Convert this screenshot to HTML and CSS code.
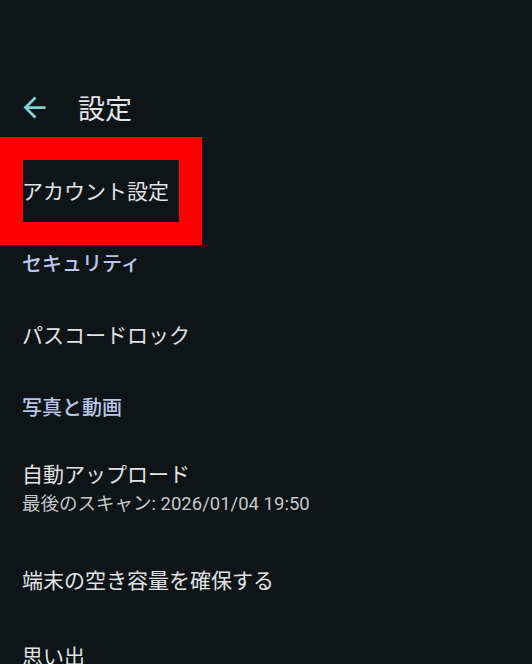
FILE: index.html
```html
<!DOCTYPE html>
<html lang="ja">
<head>
<meta charset="UTF-8">
<title>設定</title>
<link rel="stylesheet" href="styles.css">
</head>
<body>
    <div class="screen">
        <div class="topbar">
            <svg class="back" viewBox="0 0 24 24">
                <path d="M20 11H7.83l5.59-5.59L12 4l-8 8 8 8 1.41-1.41L7.83 13H20v-2z" fill="#80d2d8"/>
            </svg>
            <h1>設定</h1>
        </div>
        <div class="list">
            <div class="item first">
                アカウント設定
                <div class="mark"></div>
            </div>
            <div class="item section">セキュリティ</div>
            <div class="item">パスコードロック</div>
            <div class="item section">写真と動画</div>
            <div class="item double">
                <div class="title">自動アップロード</div>
                <div class="sub">最後のスキャン: 2026/01/04 19:50</div>
            </div>
            <div class="item tall">端末の空き容量を確保する</div>
            <div class="item last">思い出</div>
        </div>
    </div>
</body>
</html>
```

FILE: styles.css
```css
body {
    margin: 0;
    background-color: #0f1417;
    color: #e0e3e6;
    font-family: 'Roboto', 'Noto Sans CJK JP', sans-serif;
}
.screen {
    height: 664px;
    overflow: hidden;
}
.topbar {
    display: flex;
    align-items: center;
    height: 60px;
    margin-top: 77px;
    margin-bottom: 17px;
    padding-left: 18px;
}
.back {
    width: 33px;
    height: 33px;
    margin-right: 27px;
}
h1 {
    margin: 0;
    font-size: 27px;
    font-weight: 400;
    color: #e2e4e8;
}
.item {
    position: relative;
    display: flex;
    align-items: center;
    height: 72px;
    padding-left: 22px;
    font-size: 21px;
}
.section {
    color: #b8c6ea;
    font-size: 20px;
    font-weight: 500;
}
.double {
    flex-direction: column;
    align-items: flex-start;
    justify-content: center;
    height: 94px;
}
.double .title {
    line-height: 30px;
}
.double .sub {
    font-size: 18.5px;
    line-height: 28px;
    color: #c4c8cc;
}
.tall {
    height: 86px;
}
.last {
    height: 66px;
}
/* red annotation frame over the first row */
.mark {
    position: absolute;
    left: 0;
    top: -17px;
    width: 156px;
    height: 62px;
    border: 23px solid #ff0000;
}
```
